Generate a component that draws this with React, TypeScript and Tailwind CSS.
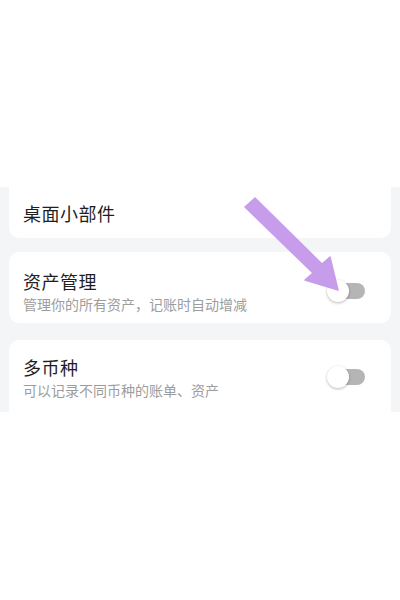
import React from 'react';

const font = { fontFamily: '"Noto Sans CJK SC", "Noto Sans", sans-serif' };

function Toggle() {
  return (
    <div className="relative w-[38px] h-[22px] shrink-0">
      <div className="absolute right-0 top-[3px] w-[34px] h-[16px] rounded-full bg-[#b5b5b5]" />
      <div className="absolute left-0 top-0 w-[22px] h-[22px] rounded-full bg-white shadow-[0_1px_3px_rgba(0,0,0,0.28)]" />
    </div>
  );
}

function SettingRow({ title, desc }: { title: string; desc: string }) {
  return (
    <div className="flex items-center justify-between pl-[14px] pr-[26px]">
      <div className="flex flex-col">
        <span className="text-[18px] leading-[26px] tracking-[0.5px] text-[#1f1f1f]">{title}</span>
        <span className="text-[14px] leading-[20px] text-[#9d9d9d]">{desc}</span>
      </div>
      <Toggle />
    </div>
  );
}

export default function App() {
  return (
    <div className="relative w-[400px] h-[600px] bg-white overflow-hidden" style={font}>
      <div className="h-[187px]" />
      <div className="h-[225px] bg-[#f4f5f7] px-[9px] flex flex-col overflow-hidden">
        <div className="h-[51px] shrink-0 bg-white rounded-b-[10px] flex items-center px-[14px]">
          <span className="text-[18px] leading-[26px] tracking-[0.5px] text-[#1f1f1f]">桌面小部件</span>
        </div>
        <div className="mt-[14px] h-[71px] shrink-0 bg-white rounded-[10px] pt-[16px]">
          <SettingRow title="资产管理" desc="管理你的所有资产，记账时自动增减" />
        </div>
        <div className="mt-[17px] h-[90px] shrink-0 bg-white rounded-[10px] pt-[14px]">
          <SettingRow title="多币种" desc="可以记录不同币种的账单、资产" />
        </div>
      </div>
      <svg className="absolute left-0 top-0 pointer-events-none" width="400" height="600">
        <polygon
          points="245,207 255,198 322,264 330,257 338,290 305,280 313,273"
          fill="#c79ceb"
          stroke="#c79ceb"
          strokeWidth="1.5"
          strokeLinejoin="round"
        />
      </svg>
    </div>
  );
}
